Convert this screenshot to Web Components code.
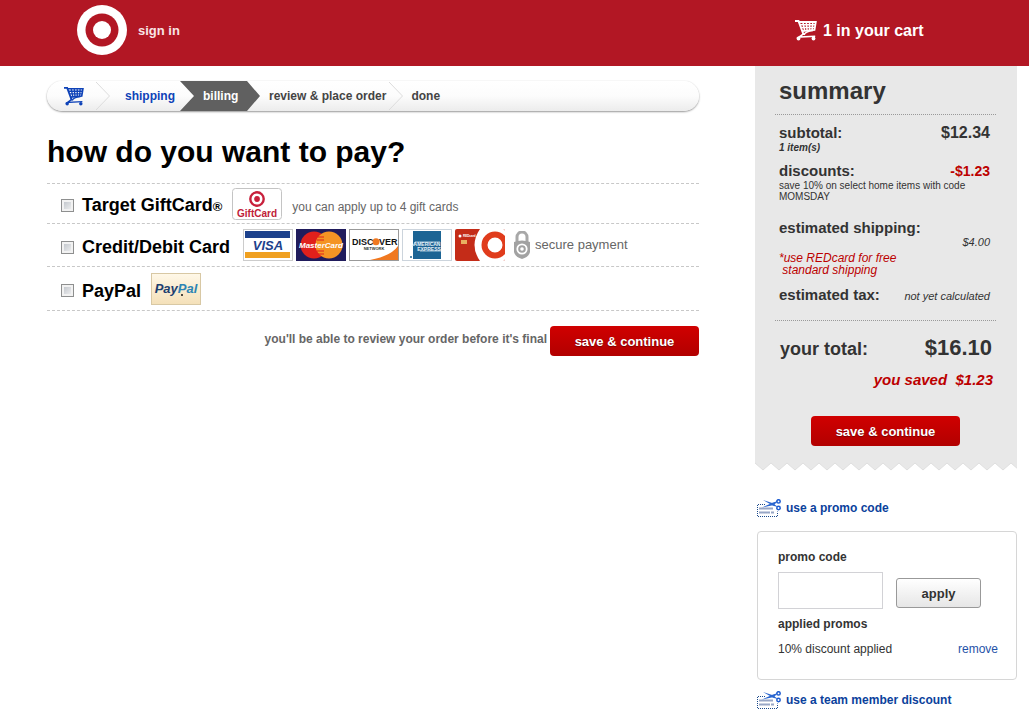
<!DOCTYPE html>
<html lang="en">
<head>
    <meta charset="UTF-8">
    <meta name="viewport" content="width=device-width, initial-scale=1.0">
    <title>Checkout - billing</title>
    <style>
        body {
            margin: 0;
            background: #fff;
            color: #333;
            font: 12px/16px "Liberation Sans", Arial, sans-serif;
            --red: #b21724;
            --text-red: #bc0000;
            --link: #0b419c;
            --side: 262px;
        }
    </style>
</head>
<body>
    <checkout-page></checkout-page>

    <template id="site-header">
        <style>
            :host {
                display: grid;
                grid-template-columns: minmax(0, 1fr) var(--side);
                column-gap: 56px;
                height: 66px;
                padding: 0 12px 0 47px;
                background: var(--red);
                box-sizing: border-box;
            }
            a { color: #fff; font-weight: bold; text-decoration: none; }
            span { padding-top: 2px; }
            div { display: flex; align-items: center; height: 60px; }
            .left { padding-left: 30px; gap: 11px; font-size: 13px; }
            .left a { color: #f8e4e6; display: flex; }
            .right { padding-left: 40px; }
            .right a { display: flex; align-items: center; gap: 6px; font-size: 16px; line-height: 22px; }
        </style>
        <div class="left">
            <a href="#" aria-label="home">
                <svg width="50" height="50" viewBox="0 0 50 50">
                    <circle cx="25" cy="25" r="25" fill="#fff"/>
                    <circle cx="25" cy="25" r="16.5" fill="#b21724"/>
                    <circle cx="25" cy="25" r="9" fill="#fff"/>
                </svg>
            </a>
            <a href="#"><span>sign in</span></a>
        </div>
        <div class="right">
            <a href="#"><cart-icon></cart-icon><span>1 in your cart</span></a>
        </div>
    </template>

    <template id="cart-icon">
        <style>
            :host { display: block; }
            svg { display: block; width: 100%; }
        </style>
        <svg width="22" height="22" viewBox="0 0 22 22" fill="none" stroke="currentColor">
            <path d="M0 2h3.500L8.500 15.500" stroke-width="2"/>
            <path d="M3.500 3h17.300l-1.300 8-12.500 1.200" stroke-width="1.800"/>
            <path d="M5 5.800h15M6 8.600h13.500M8 3.500l1.600 8M11.300 3.500l.8 8M14.600 3.500v7.700M17.800 3.500l-.7 7.500" stroke-width="1.500"/>
            <path d="M18 11.500q-8 1-9 4.500M8.500 14.800L4 18l16.200-.8" stroke-width="1.600"/>
            <g fill="currentColor" stroke="none"><circle cx="3.500" cy="19.500" r="1.900"/><circle cx="18.500" cy="19.500" r="1.900"/></g>
        </svg>
    </template>

    <template id="checkout-steps">
        <style>
            :host {
                display: flex;
                align-items: center;
                height: 30px;
                padding-left: 17px;
                border-radius: 16px;
                background: linear-gradient(#fff, #fcfcfc 50%, #ececec);
                box-shadow: 0 1px 2px #999, 0 0 1px #ddd;
                box-sizing: border-box;
            }
        </style>
        <slot></slot>
    </template>

    <template id="checkout-step">
        <style>
            :host { display: flex; align-items: center; height: 30px; font-weight: bold; color: #444; }
            a { color: inherit; text-decoration: none; }
            :host([state="past"]) { color: #0f43b8; }
            :host([state="current"]) {
                width: 57px;
                height: 30px;
                padding-left: 23px;
                color: #fff;
                background: #606060;
                clip-path: polygon(0 0, 67px 0, 80px 50%, 67px 100%, 0 100%, 14px 50%);
            }
            svg { display: none; margin: 0 15px 0 12px; }
            :host([divider]) svg { display: block; }
            :host([tight]) svg { margin: 0 8px 0 3px; }
            :host([state="past"]:not([divider])) { margin-right: 5px; }
            :host([state="current"]) { margin-right: 9px; }
        </style>
        <a href="#"><slot></slot></a>
        <svg width="14" height="28" viewBox="0 0 14 28" fill="none"><path d="M0 0l13.500 14L0 28" stroke="#dcdcdc"/></svg>
    </template>

    <template id="payment-option">
        <style>
            :host {
                display: flex;
                align-items: center;
                gap: 10px;
                min-height: 42px;
                border-bottom: 1px dashed #c8c8c8;
                padding-left: 14px;
                color: #666;
            }
            :host([compact]) { min-height: 39px; }
            .name { display: flex; align-items: center; gap: 8px; padding-top: 4px; }
            label { font-size: 18px; line-height: 22px; font-weight: bold; color: #000; }
            input {
                appearance: none;
                width: 13px;
                height: 13px;
                margin: 0;
                border: 1px solid #8e8f8f;
                background: linear-gradient(135deg, #b9bec5, #f6f6f6) padding-box;
                box-shadow: inset 0 0 0 2px #f2f2f2;
            }
            input:checked { background: #555; }
        </style>
        <div class="name">
            <input type="checkbox" id="pick">
            <label for="pick"><slot name="name"></slot></label>
        </div>
        <slot></slot>
    </template>

    <template id="card-logo">
        <style>
            :host { display: block; width: 50px; height: 32px; }
            svg { display: block; font-family: "Liberation Sans", Arial, sans-serif; font-weight: bold; }
        </style>
    </template>

    <template id="red-button">
        <style>
            :host { display: block; }
            button {
                display: block;
                width: 149px;
                height: 30px;
                padding: 2px 0 0;
                border: 0;
                border-radius: 4px;
                color: #fff;
                background: linear-gradient(#d00000, #b20000);
                font: bold 13px/16px "Liberation Sans", Arial, sans-serif;
                text-shadow: 0 1px 1px #700;
                cursor: pointer;
            }
        </style>
        <button type="button"><slot></slot></button>
    </template>

    <template id="summary-line">
        <style>
            :host { display: grid; grid-template-columns: auto auto; justify-content: space-between; align-items: baseline; }
            .label { font-size: 15px; line-height: 18px; font-weight: bold; }
            .value { text-align: right; font-size: 11px; line-height: 12px; font-style: italic; }
            :host([strong]) .value { font-size: 16px; line-height: 18px; font-weight: bold; font-style: normal; }
            :host([off]) .value { font-size: 14px; line-height: 18px; font-weight: bold; font-style: normal; color: var(--text-red); }
            :host([below]) .label { grid-column: 1 / -1; }
            :host([below]) .value { grid-column: 2; line-height: 10px; }
            .note { grid-column: 1 / -1; font-size: 10px; line-height: 11px; }
        </style>
        <span class="label"><slot name="label"></slot></span>
        <span class="value"><slot name="value"></slot></span>
        <div class="note"><slot></slot></div>
    </template>

    <template id="order-summary">
        <style>
            :host { display: block; }
            .paper { padding: 11px 21px 16px 20px; background: #e8e8e8; }
            h2 { margin: 0; padding: 0 4px 9px; font-size: 24px; line-height: 28px; }
            .lines { border: 1px dotted #999; border-width: 1px 0; padding: 9px 6px 16px 4px; }
            .lines summary-line + summary-line { margin-top: 9px; }
            .lines .ship.ship { margin-top: 17px; }
            .lines .tax.tax { margin-top: 10px; }
            .redcard { margin-top: 5px; font-size: 12px; line-height: 12px; font-style: italic; color: var(--text-red); }
            .total { display: flex; justify-content: space-between; align-items: baseline; padding: 14px 4px 0 5px; font-weight: bold; font-size: 18px; line-height: 26px; }
            .total b { font-size: 22px; }
            .saved { padding: 9px 3px 27px; text-align: right; font: italic bold 15px/18px "Liberation Sans", Arial, sans-serif; color: var(--text-red); white-space: pre; }
            red-button { width: 149px; margin: 0 auto; }
            svg { display: block; }
        </style>
        <div class="paper">
            <h2>summary</h2>
            <div class="lines">
                <summary-line strong>
                    <span slot="label">subtotal:</span><span slot="value">$12.34</span>
                    <b><i>1 item(s)</i></b>
                </summary-line>
                <summary-line off>
                    <span slot="label">discounts:</span><span slot="value">-$1.23</span>
                    save 10% on select home items with code<br>MOMSDAY
                </summary-line>
                <summary-line class="ship" below>
                    <span slot="label">estimated shipping:</span><span slot="value">$4.00</span>
                    <div class="redcard">*use REDcard for free<br>&nbsp;standard shipping</div>
                </summary-line>
                <summary-line class="tax">
                    <span slot="label">estimated tax:</span><span slot="value">not yet calculated</span>
                </summary-line>
            </div>
            <div class="total"><span>your total:</span><b>$16.10</b></div>
            <div class="saved">you saved  $1.23</div>
            <red-button>save &amp; continue</red-button>
        </div>
        <svg width="100%" height="10">
            <defs>
                <pattern id="teeth" width="16" height="10" patternUnits="userSpaceOnUse">
                    <path d="M0 0H16V1L8 8L0 1z" fill="#e8e8e8"/>
                    <path d="M0 1l8 7 8-7" fill="none" stroke="#dedede"/>
                </pattern>
            </defs>
            <rect width="100%" height="10" fill="url(#teeth)"/>
        </svg>
    </template>

    <template id="promo-link">
        <style>
            :host { display: block; }
            a { display: flex; align-items: center; gap: 5px; color: var(--link); font-weight: bold; line-height: 18px; text-decoration: none; }
        </style>
        <a href="#">
            <svg width="24" height="18" viewBox="0 0 24 18" fill="none">
                <path d="M8 5.500H.5v12h20v-5" stroke="#1c4a8c" stroke-dasharray="1 1"/>
                <path d="M2 9.500h14M2 13.500h11M14 13.500h3" stroke="#97a6c6" stroke-width="2"/>
                <path d="M6 1l10 3.200 5 3.800-5-1.200zM5 8.500l11-5 5-1.500-4 4z" fill="#2b66cf"/>
                <circle cx="21.500" cy="2.400" r="1.700" stroke="#1d5cd0" stroke-width="1.500"/>
                <circle cx="21.500" cy="9" r="1.700" stroke="#1d5cd0" stroke-width="1.500"/>
            </svg>
            <slot></slot>
        </a>
    </template>

    <template id="promo-box">
        <style>
            :host { display: block; border: 1px solid #d6d6d6; border-radius: 4px; padding: 17px 18px 22px 20px; }
            label, h3 { display: block; margin: 0; font-size: 12px; font-weight: bold; line-height: 16px; }
            .entry { display: flex; align-items: center; gap: 13px; padding: 7px 0; }
            input { width: 105px; height: 37px; border: 1px solid #d2d2d6; padding: 0 6px; box-sizing: border-box; font: inherit; }
            button {
                width: 85px;
                height: 30px;
                margin-top: 4px;
                padding: 2px 0 0;
                border: 1px solid #999;
                border-radius: 3px;
                color: #333;
                background: linear-gradient(#fff, #e6e6e6);
                font: bold 13px/16px "Liberation Sans", Arial, sans-serif;
            }
            .applied { display: flex; justify-content: space-between; padding-top: 9px; }
            a { color: #1f52a8; text-decoration: none; }
        </style>
        <label for="code">promo code</label>
        <div class="entry">
            <input id="code" type="text">
            <button type="button">apply</button>
        </div>
        <h3>applied promos</h3>
        <div class="applied"><span>10% discount applied</span><a href="#">remove</a></div>
    </template>

    <template id="checkout-page">
        <style>
            :host { display: block; }
            main {
                display: grid;
                grid-template-columns: minmax(0, 1fr) var(--side);
                column-gap: 56px;
                padding: 0 12px 12px 47px;
            }
            section { padding-top: 15px; }
            h1 { margin: 0; padding: 23px 0 14px; font-size: 30px; line-height: 35px; color: #000; }
            .options { border-top: 1px dashed #c8c8c8; }
            .options payment-option:last-child { min-height: 43px; }
            .reg { font-size: 13px; }
            .hint { padding-top: 6px; }
            .cards { display: flex; align-items: center; gap: 3px; padding-left: 3px; }
            .secure { display: flex; align-items: center; gap: 4px; padding-left: 5px; font-size: 13px; }
            .submit { display: flex; justify-content: flex-end; align-items: center; gap: 3px; padding-top: 15px; }
            .submit p { margin: 0; padding-bottom: 4px; font-weight: bold; color: #666; }
            .promo { padding: 27px 0 0 2px; }
            promo-box { margin: 14px 0 11px; }
            checkout-step cart-icon { width: 20px; }
        </style>
        <site-header></site-header>
        <main>
            <section>
                <checkout-steps>
                    <checkout-step state="past" divider><cart-icon></cart-icon></checkout-step>
                    <checkout-step state="past">shipping</checkout-step>
                    <checkout-step state="current">billing</checkout-step>
                    <checkout-step divider tight>review &amp; place order</checkout-step>
                    <checkout-step>done</checkout-step>
                </checkout-steps>
                <h1>how do you want to pay?</h1>
                <div class="options">
                    <payment-option compact>
                        <span slot="name">Target GiftCard<span class="reg">®</span></span>
                        <card-logo type="gift"></card-logo>
                        <span class="hint">you can apply up to 4 gift cards</span>
                    </payment-option>
                    <payment-option>
                        <span slot="name">Credit/Debit Card</span>
                        <div class="cards">
                            <card-logo type="visa"></card-logo>
                            <card-logo type="mastercard"></card-logo>
                            <card-logo type="discover"></card-logo>
                            <card-logo type="amex"></card-logo>
                            <card-logo type="redcard"></card-logo>
                            <span class="secure">
                                <svg width="18" height="28" viewBox="0 0 18 28" fill="none">
                                    <path d="M4 12V6a5 5 0 0 1 10 0v6" stroke="#a8a8a8" stroke-width="3"/>
                                    <path d="M1 11q8-3 16 0v10q-1 5-8 7q-7-2-8-7z" fill="#a2a2a2"/>
                                    <circle cx="9" cy="18" r="4.700" stroke="#fff" stroke-width="1.800"/>
                                    <circle cx="9" cy="18" r="1.800" fill="#fff"/>
                                </svg>
                                secure payment
                            </span>
                        </div>
                    </payment-option>
                    <payment-option>
                        <span slot="name">PayPal</span>
                        <card-logo type="paypal"></card-logo>
                    </payment-option>
                </div>
                <div class="submit">
                    <p>you'll be able to review your order before it's final</p>
                    <red-button>save &amp; continue</red-button>
                </div>
            </section>
            <aside>
                <order-summary></order-summary>
                <div class="promo">
                    <promo-link>use a promo code</promo-link>
                    <promo-box></promo-box>
                    <promo-link>use a team member discount</promo-link>
                </div>
            </aside>
        </main>
    </template>

    <script>
        const logos = {
            gift: `
                <rect x=".5" y=".5" width="49" height="31" rx="3" fill="#fff" stroke="#c4c4c4"/>
                <circle cx="25" cy="11" r="6.700" fill="none" stroke="#c8203c" stroke-width="2.400"/>
                <circle cx="25" cy="11" r="2.900" fill="#c8203c"/>
                <text x="25" y="29" font-size="10" text-anchor="middle" fill="#c02038">GiftCard</text>`,
            visa: `
                <rect x=".5" y=".5" width="49" height="31" fill="#fff" stroke="#ccc"/>
                <path d="M2 2h45v7H2z" fill="#1c418c"/>
                <path d="M2 23h45v6H2z" fill="#f0a020"/>
                <text x="25" y="21" font-size="13" font-style="italic" text-anchor="middle" fill="#1c418c">VISA</text>`,
            mastercard: `
                <rect width="50" height="32" fill="#201c5c"/>
                <circle cx="18" cy="16" r="13.500" fill="#e0201c"/>
                <circle cx="33" cy="16" r="13.500" fill="#f49424"/>
                <path d="M22 8h6M21 11h7M21 22h7M22 25h6" stroke="#e0201c"/>
                <text x="25" y="19" font-size="8" font-style="italic" text-anchor="middle" fill="#fff">MasterCard</text>`,
            discover: `
                <rect x=".5" y=".5" width="49" height="31" fill="#fff" stroke="#999"/>
                <path d="M21 31Q42 27 49 17V31z" fill="#f07820"/>
                <text x="3" y="16" font-size="9" fill="#111">DISC</text>
                <circle cx="27" cy="12.800" r="3.500" fill="#f07820"/>
                <text x="30" y="16" font-size="9" fill="#111">VER</text>
                <text x="25" y="21" font-size="4" text-anchor="middle" fill="#333">NETWORK</text>`,
            amex: `
                <rect x=".5" y=".5" width="49" height="31" fill="#fff" stroke="#ccd4dc"/>
                <path d="M11 2h28v28H11z" fill="#1c6494"/>
                <path d="M11 17l2-4h25M18 22h21" fill="none" stroke="#a8c8dc"/>
                <text x="25" y="17" font-size="5" text-anchor="middle" fill="#e4f0f8">AMERICAN</text>
                <text x="27" y="22" font-size="5" text-anchor="middle" fill="#e4f0f8">EXPRESS</text>
                <circle cx="9" cy="28" r="1" fill="#1c6494"/>`,
            redcard: `
                <clipPath id="c"><rect width="50" height="32" rx="2"/></clipPath>
                <g clip-path="url(#c)">
                    <rect width="50" height="32" fill="#c42c18"/>
                    <path d="M25 0Q14 16 25 32H50V0z" fill="#fff"/>
                    <circle cx="40" cy="16" r="10.500" fill="none" stroke="#e03c1c" stroke-width="6"/>
                    <path d="M6 11h6v4H6z" fill="#e8b060"/>
                    <circle cx="5" cy="7" r="1.500" fill="#fff"/>
                    <text x="8" y="8" font-size="3" fill="#fff">REDcard</text>
                </g>`,
            paypal: `
                <defs><linearGradient id="p" x2="0" y2="1"><stop stop-color="#fff8e8"/><stop offset="1" stop-color="#f4e0b8"/></linearGradient></defs>
                <rect x=".5" y=".5" width="49" height="31" fill="url(#p)" stroke="#d8c8a4"/>
                <text x="25" y="20" font-size="13" font-style="italic" text-anchor="middle" fill="#1c4070">Pay<tspan fill="#2c84b4">Pal</tspan></text>
                <circle cx="31" cy="22" r="1" fill="#111"/>`
        };

        const define = name => customElements.define(name, class extends HTMLElement {
            connectedCallback() {
                if (this.shadowRoot) return;
                this.attachShadow({mode: 'open'});
                this.shadowRoot.append(document.getElementById(name).content.cloneNode(true));
            }
        });

        customElements.define('card-logo', class extends HTMLElement {
            connectedCallback() {
                if (this.shadowRoot) return;
                this.attachShadow({mode: 'open'});
                this.shadowRoot.append(document.getElementById('card-logo').content.cloneNode(true));
                this.shadowRoot.innerHTML += `<svg width="50" height="32" viewBox="0 0 50 32">${logos[this.getAttribute('type')]}</svg>`;
            }
        });

        ['cart-icon', 'site-header', 'checkout-steps', 'checkout-step', 'payment-option', 'red-button',
         'summary-line', 'order-summary', 'promo-link', 'promo-box', 'checkout-page'].forEach(define);
    </script>
</body>
</html>
